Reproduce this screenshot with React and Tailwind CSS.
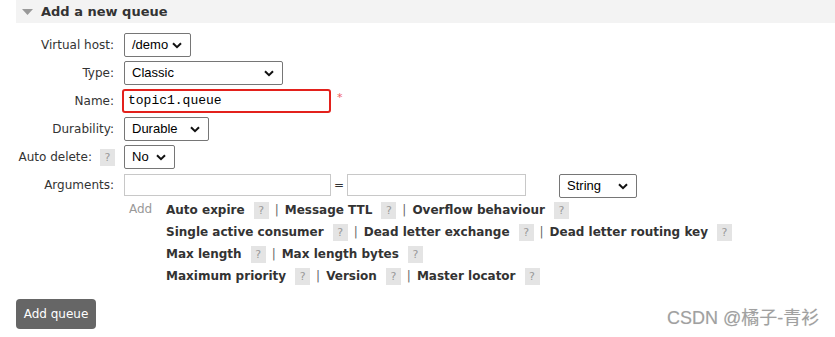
import React from "react";

const FONT = "font-['DejaVu_Sans',Verdana,sans-serif]";
const SEL_FONT = "font-['Liberation_Sans',Arial,sans-serif]";

const Help = () => (
  <span className="inline-flex h-[17px] w-[15px] items-center justify-center bg-[#e4e4e4] text-[11px] font-normal text-[#999]">?</span>
);

const Chevron = () => (
  <svg width="10" height="7" viewBox="0 0 10 7" className="shrink-0">
    <path d="M1 1.2 L5 5.2 L9 1.2" fill="none" stroke="#111" strokeWidth="2" />
  </svg>
);

const FakeSelect = ({ value, width }) => (
  <div
    className={`flex h-[24px] items-center justify-between rounded-[2px] border border-[#767676] bg-white pl-[7px] pr-[8px] text-[13px] text-black ${SEL_FONT}`}
    style={{ width }}
  >
    <span>{value}</span>
    <Chevron />
  </div>
);

const Row = ({ label, help, children }) => (
  <div className="flex h-[24px] items-center">
    <div className="flex w-[124px] shrink-0 items-center justify-end pr-[10px] text-[12px] text-[#333]">
      <span>{label}</span>
      {help ? <span className="ml-[8px] -mr-[1px]"><Help /></span> : null}
    </div>
    {children}
  </div>
);

const argRows = [
  ["Auto expire", "Message TTL", "Overflow behaviour"],
  ["Single active consumer", "Dead letter exchange", "Dead letter routing key"],
  ["Max length", "Max length bytes"],
  ["Maximum priority", "Version", "Master locator"],
];

const App = () => {
  return (
    <div className={`relative h-[337px] w-[835px] overflow-hidden bg-white ${FONT}`}>
      <div className="ml-[16px] flex h-[23px] items-center bg-[#f3f3f3] pl-[6px]">
        <svg width="11" height="6" viewBox="0 0 11 6">
          <path d="M0 0 H11 L5.5 6 Z" fill="#999" />
        </svg>
        <span className="ml-[8px] text-[13px] font-bold text-[#333]">Add a new queue</span>
      </div>

      <div className="mt-[10px] flex flex-col gap-[4px]">
        <Row label="Virtual host:">
          <FakeSelect value="/demo" width={67} />
        </Row>
        <Row label="Type:">
          <FakeSelect value="Classic" width={159} />
        </Row>
        <Row label="Name:">
          <div className="-ml-[2px] flex h-[24px] w-[209px] items-center rounded-[3px] border-2 border-[#e3211c] pl-[4px] font-['Liberation_Mono','Courier_New',monospace] text-[13px] text-black">
            topic1.queue
          </div>
          <span className="ml-[6px] -mt-[6px] text-[11px] text-[#f06060]">*</span>
        </Row>
        <Row label="Durability:">
          <FakeSelect value="Durable" width={85} />
        </Row>
        <Row label="Auto delete:" help>
          <FakeSelect value="No" width={51} />
        </Row>
        <Row label="Arguments:">
          <div className="h-[22px] w-[207px] border border-[#c8c8c8] bg-white" />
          <span className="mx-[3px] text-[12px] text-[#333]">=</span>
          <div className="h-[22px] w-[179px] border border-[#c8c8c8] bg-white" />
          <div className="ml-[33px] mt-[2px]">
            <FakeSelect value="String" width={78} />
          </div>
        </Row>
      </div>

      <div className="mt-[2px] flex pl-[129px]">
        <div className="w-[37px] shrink-0 pt-[1px] text-[12px] text-[#999]">Add</div>
        <div className="flex flex-col">
          {argRows.map((row, i) => (
            <div key={i} className="flex h-[22px] items-center text-[12px] font-bold text-[#333]">
              {row.map((item, j) => (
                <React.Fragment key={item}>
                  {j > 0 ? <span className="mx-[6px] font-normal text-[#666]">|</span> : null}
                  <span>{item}</span>
                  <span className="ml-[9px]"><Help /></span>
                </React.Fragment>
              ))}
            </div>
          ))}
        </div>
      </div>

      <button className="ml-[16px] mt-[12px] flex h-[30px] w-[80px] items-center justify-center rounded-[4px] bg-[#666] text-[12px] text-white">
        Add queue
      </button>

      <div className="absolute left-[667px] top-[306px] font-['Liberation_Sans','Noto_Sans_CJK_SC',sans-serif] text-[18px] leading-[24px] text-[#a0a0a0] [text-shadow:0_0_1px_#ddd]">
        CSDN @橘子-青衫
      </div>
    </div>
  );
};

export default App;
